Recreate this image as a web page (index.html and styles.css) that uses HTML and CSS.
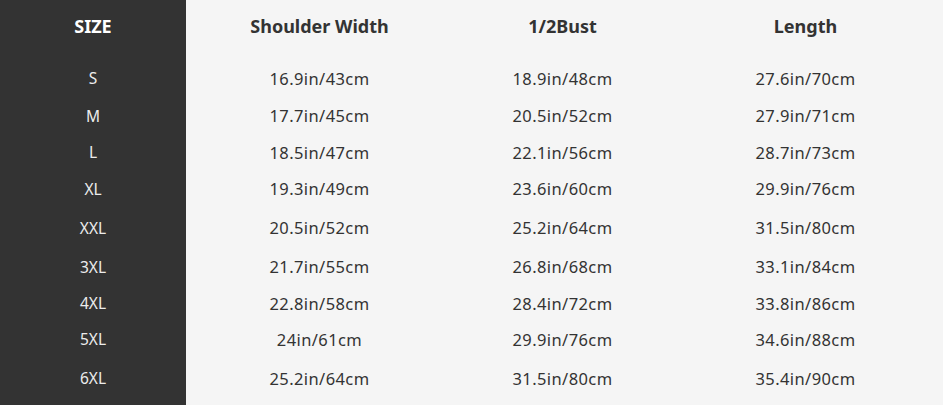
FILE: index.html
```html
<!DOCTYPE html>
<html>
<head>
<meta charset="utf-8">
<link rel="stylesheet" href="styles.css">
</head>
<body>
<div class="chart">
  <div class="sizes">
    <div class="head">SIZE</div>
    <div class="cell r1">S</div>
    <div class="cell r2">M</div>
    <div class="cell r3">L</div>
    <div class="cell r4">XL</div>
    <div class="cell r5">XXL</div>
    <div class="cell r6">3XL</div>
    <div class="cell r7">4XL</div>
    <div class="cell r8">5XL</div>
    <div class="cell r9">6XL</div>
  </div>
  <div class="data">
    <div class="col">
      <div class="head">Shoulder Width</div>
      <div class="cell r1">16.9in/43cm</div>
      <div class="cell r2">17.7in/45cm</div>
      <div class="cell r3">18.5in/47cm</div>
      <div class="cell r4">19.3in/49cm</div>
      <div class="cell r5">20.5in/52cm</div>
      <div class="cell r6">21.7in/55cm</div>
      <div class="cell r7">22.8in/58cm</div>
      <div class="cell r8">24in/61cm</div>
      <div class="cell r9">25.2in/64cm</div>
    </div>
    <div class="col">
      <div class="head">1/2Bust</div>
      <div class="cell r1">18.9in/48cm</div>
      <div class="cell r2">20.5in/52cm</div>
      <div class="cell r3">22.1in/56cm</div>
      <div class="cell r4">23.6in/60cm</div>
      <div class="cell r5">25.2in/64cm</div>
      <div class="cell r6">26.8in/68cm</div>
      <div class="cell r7">28.4in/72cm</div>
      <div class="cell r8">29.9in/76cm</div>
      <div class="cell r9">31.5in/80cm</div>
    </div>
    <div class="col">
      <div class="head">Length</div>
      <div class="cell r1">27.6in/70cm</div>
      <div class="cell r2">27.9in/71cm</div>
      <div class="cell r3">28.7in/73cm</div>
      <div class="cell r4">29.9in/76cm</div>
      <div class="cell r5">31.5in/80cm</div>
      <div class="cell r6">33.1in/84cm</div>
      <div class="cell r7">33.8in/86cm</div>
      <div class="cell r8">34.6in/88cm</div>
      <div class="cell r9">35.4in/90cm</div>
    </div>
  </div>
</div>
</body>
</html>
```
FILE: styles.css
```css
html, body {
  margin: 0;
  padding: 0;
  background: #f5f5f5;
}
.chart {
  display: flex;
  width: 943px;
  height: 405px;
  font-family: "Noto Sans", "Open Sans", sans-serif;
  background: #f5f5f5;
  color: #333333;
}
.sizes {
  width: 186px;
  background: #333333;
  color: #ececec;
  display: flex;
  flex-direction: column;
  align-items: stretch;
}
.data {
  flex: 1;
  display: grid;
  grid-template-columns: 243px 243px 243px;
  padding-left: 12px;
}
.col {
  display: flex;
  flex-direction: column;
}
.head {
  height: 52px;
  margin-bottom: 7px;
  display: flex;
  align-items: center;
  justify-content: center;
  font-weight: 700;
  font-size: 18px;
}
.sizes .head {
  color: #ffffff;
  font-size: 18px;
}
.cell {
  display: flex;
  align-items: center;
  justify-content: center;
  font-size: 16.5px;
  letter-spacing: 0.4px;
}
.sizes .cell {
  font-size: 15.5px;
  letter-spacing: 0;
}
.r1 { height: 38px; }
.r2 { height: 37px; }
.r3 { height: 36px; }
.r4 { height: 37px; }
.r5 { height: 41px; }
.r6 { height: 37px; }
.r7 { height: 36px; }
.r8 { height: 36px; }
.r9 { height: 42px; }
```
